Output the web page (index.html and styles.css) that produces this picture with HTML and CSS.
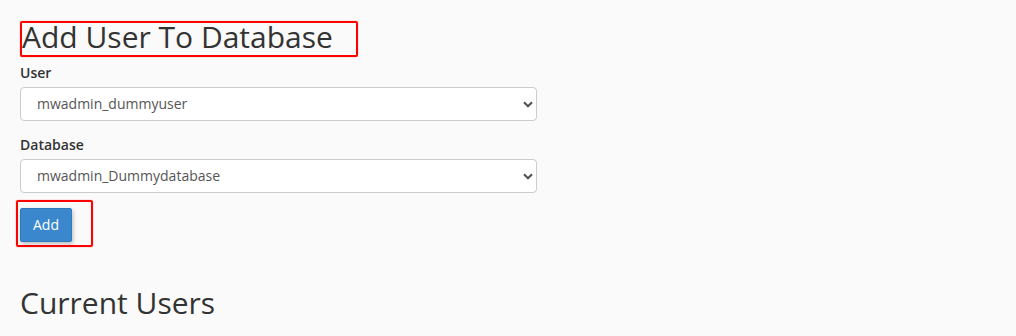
FILE: index.html
```html
<!DOCTYPE html>
<html lang="en">
<head>
<meta charset="utf-8">
<title>Add User To Database</title>
<link rel="stylesheet" href="styles.css">
</head>
<body>
<main class="page">
  <div class="highlight highlight-title">
    <h1 class="title">Add User To Database</h1>
  </div>
  <form class="form">
    <div class="form-group">
      <label class="label">User</label>
      <div class="select">
        <span class="select-value">mwadmin_dummyuser</span>
        <svg class="chevron" width="10" height="7" viewBox="0 0 10 7"><path d="M1 1.2 L5 5.2 L9 1.2" fill="none" stroke="#555" stroke-width="2.2"/></svg>
      </div>
    </div>
    <div class="form-group form-group-last">
      <label class="label">Database</label>
      <div class="select">
        <span class="select-value">mwadmin_Dummydatabase</span>
        <svg class="chevron" width="10" height="7" viewBox="0 0 10 7"><path d="M1 1.2 L5 5.2 L9 1.2" fill="none" stroke="#555" stroke-width="2.2"/></svg>
      </div>
    </div>
    <div class="highlight highlight-btn">
      <button type="button" class="btn">Add</button>
    </div>
  </form>
  <h2 class="title title-sub">Current Users</h2>
</main>
</body>
</html>
```

FILE: styles.css
```css
html, body {
  margin: 0;
  padding: 0;
  background: #fafafa;
}
body {
  font-family: "Open Sans", "Liberation Sans", sans-serif;
  color: #333;
}
.page {
  padding: 21px 20px 0 20px;
  display: flex;
  flex-direction: column;
  align-items: flex-start;
}
.highlight {
  border: 2px solid #f00;
  border-radius: 2px;
  box-shadow: 0 0 1px rgba(255, 0, 0, 0.8);
  box-sizing: border-box;
}
.highlight-title {
  width: 338px;
  height: 36px;
}
.title {
  margin: 0;
  font-size: 30px;
  font-weight: 400;
  line-height: 27px;
  color: #333;
}
.form {
  display: flex;
  flex-direction: column;
  align-items: flex-start;
  margin-top: 6px;
}
.form-group {
  display: flex;
  flex-direction: column;
  margin-bottom: 14px;
}
.form-group-last {
  margin-bottom: 7px;
}
.label {
  font-size: 14px;
  font-weight: 600;
  line-height: 20px;
  margin-bottom: 4px;
  color: #333;
}
.select {
  box-sizing: border-box;
  width: 517px;
  height: 34px;
  border: 1px solid #ccc;
  border-radius: 4px;
  background: #fff;
  display: flex;
  align-items: center;
  justify-content: space-between;
  padding: 0 3px 0 16px;
  font-size: 14px;
  line-height: 20px;
  color: #555;
}
.chevron {
  display: block;
  margin-top: 1px;
}
.highlight-btn {
  margin-left: -4px;
  padding: 6px 19px 3px 2px;
}
.btn {
  display: block;
  box-sizing: border-box;
  width: 52px;
  height: 34px;
  padding: 0;
  border: 1px solid #3079bb;
  border-radius: 2px;
  background: #3a87cd;
  color: #fff;
  font-family: "Open Sans", "Liberation Sans", sans-serif;
  font-size: 14px;
  line-height: 20px;
  box-shadow: 1px 2px 4px rgba(0, 0, 0, 0.25);
}
.title-sub {
  margin-top: 39px;
  line-height: 33px;
}
```
